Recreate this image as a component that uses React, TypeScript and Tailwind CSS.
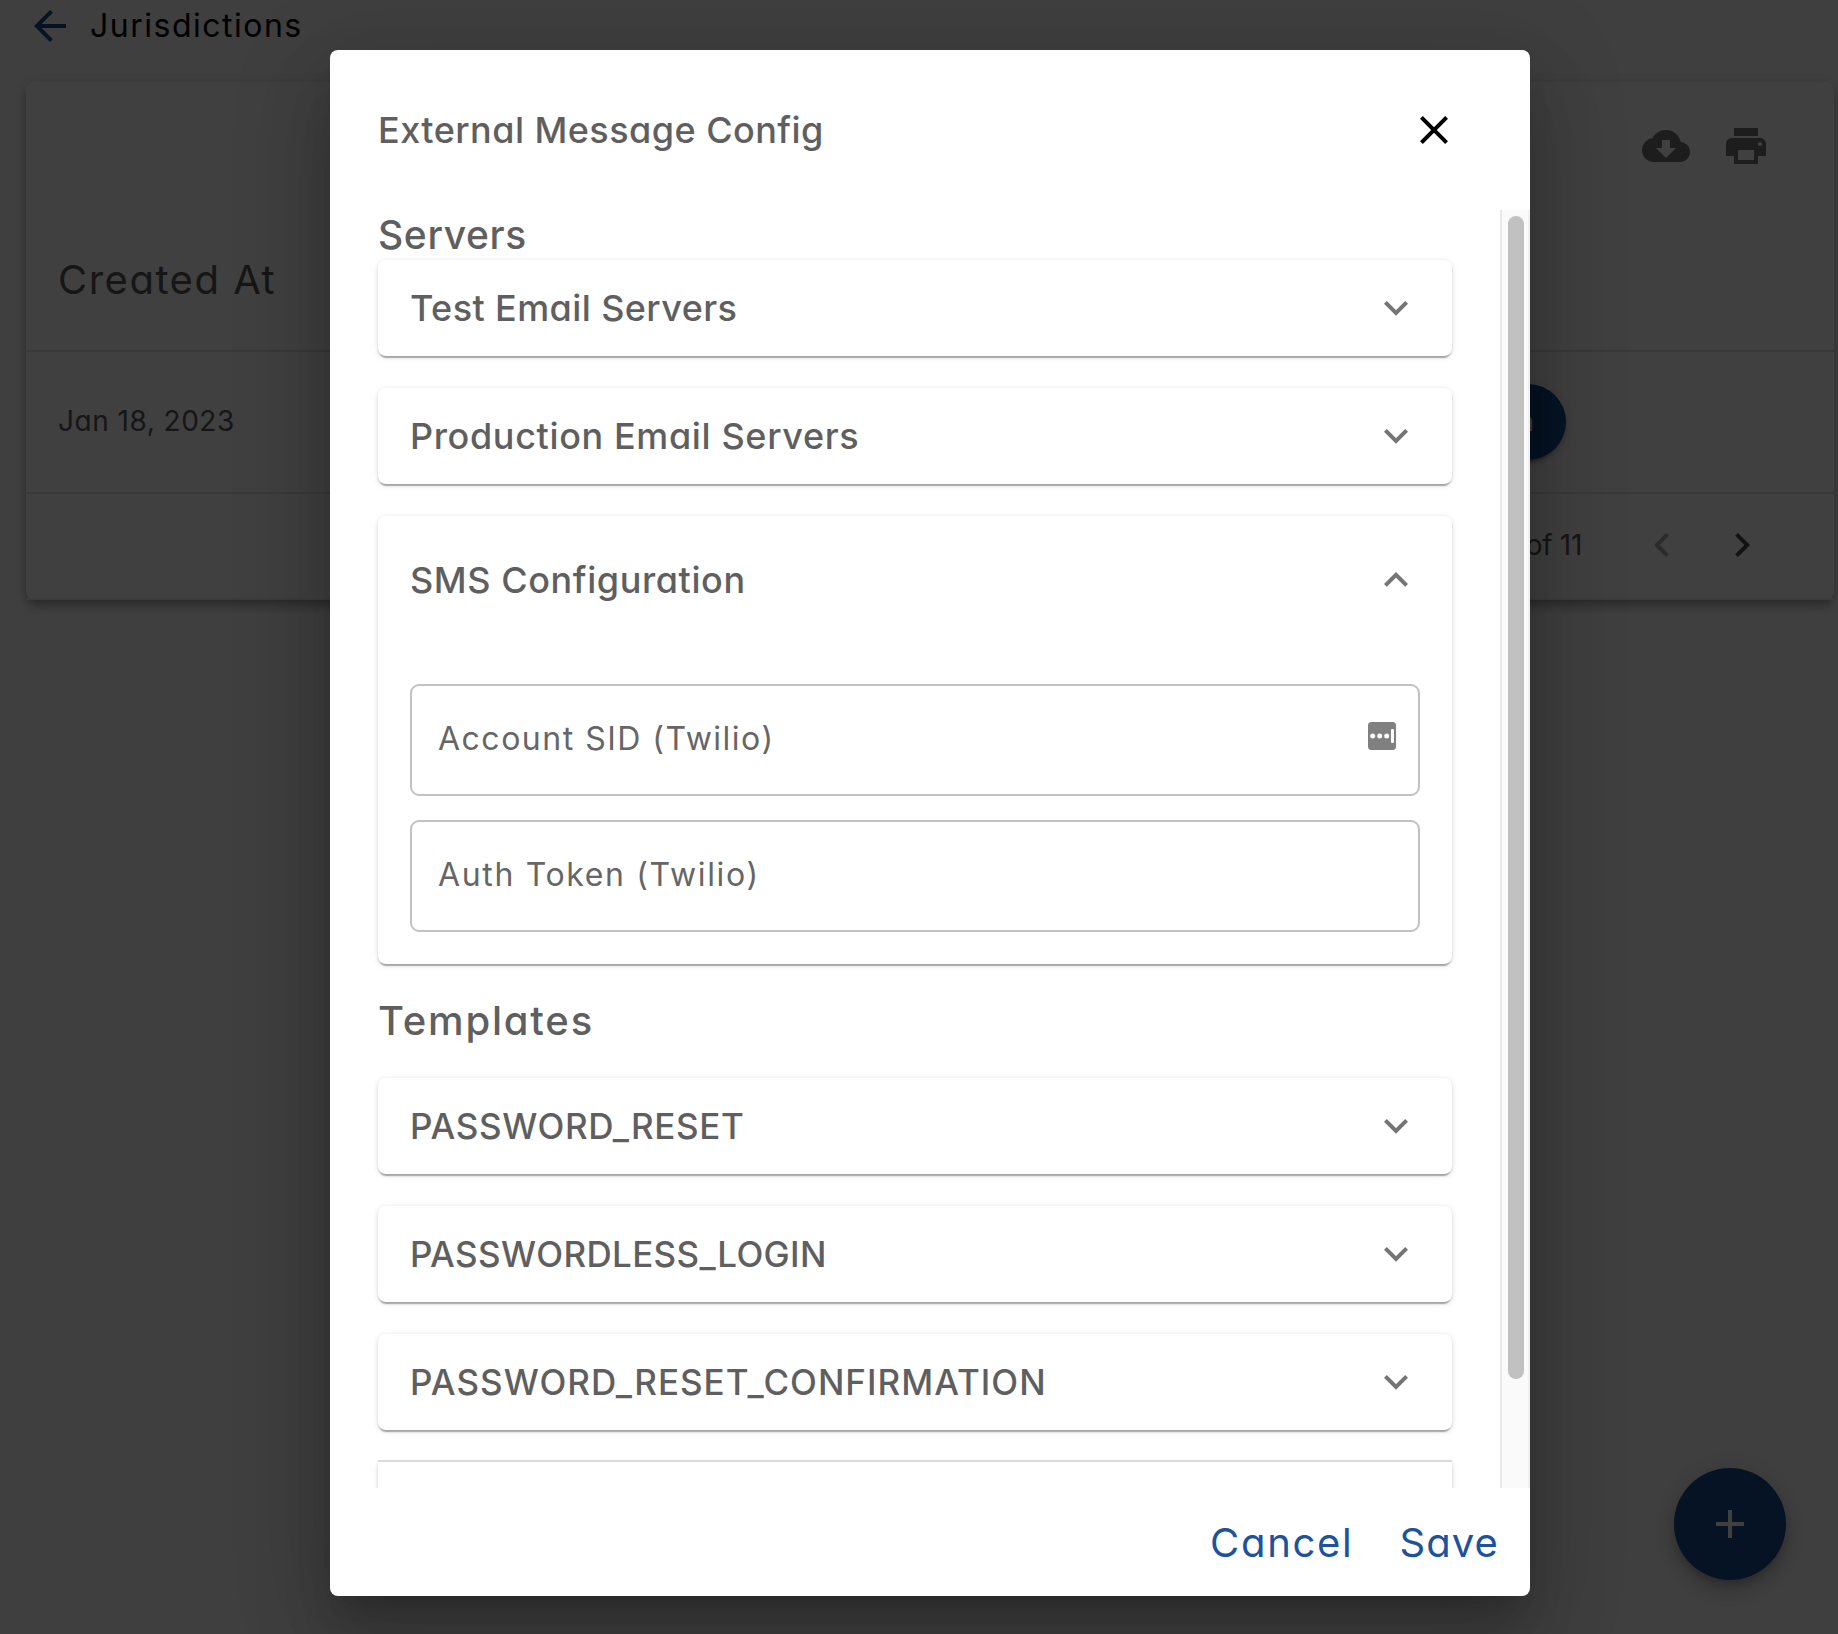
import type { ReactNode } from "react";
import { MdAdd, MdArrowBack, MdChevronLeft, MdChevronRight, MdClose, MdCloudDownload, MdPrint } from "react-icons/md";

function Chevron({ up = false }: { up?: boolean }) {
  return (
    <svg width="24" height="16" viewBox="0 0 24 16" fill="none" stroke="#757575" strokeWidth="4" className="shrink-0">
      <path d={up ? "M1.4 13.4L12 2.8L22.6 13.4" : "M1.4 2.4L12 13L22.6 2.4"} />
    </svg>
  );
}

const panelShadow =
  "shadow-[0_4px_1px_-2px_rgba(0,0,0,0.2),0_2px_2px_0_rgba(0,0,0,0.14),0_1px_6px_0_rgba(0,0,0,0.12)]";

type PanelProps = { title: string; type: string; open?: boolean; children?: ReactNode };

function Panel({ title, type, open = false, children }: PanelProps) {
  return (
    <section className={`shrink-0 rounded-lg bg-white ${panelShadow}`}>
      <header className={`flex items-center justify-between pl-8 pr-11 ${open ? "h-32" : "h-24"}`}>
        <span className={`font-medium leading-none ${type}`}>{title}</span>
        <Chevron up={open} />
      </header>
      {children}
    </section>
  );
}

function Field({ label, spacing, icon }: { label: string; spacing: string; icon?: ReactNode }) {
  return (
    <div className="flex h-28 items-center justify-between rounded-[9px] border-2 border-[#c2c2c2] pl-[26px] pr-[22px] pb-1">
      <span className={`pt-0.5 text-[32px] leading-none text-[#666] ${spacing}`}>{label}</span>
      {icon}
    </div>
  );
}

function AutofillIcon() {
  return (
    <svg width="28" height="28" viewBox="0 0 28 28" className="mb-1">
      <rect width="28" height="28" rx="3.5" fill="#808080" />
      <g fill="#fff">
        <circle cx="4.7" cy="14" r="2.5" />
        <circle cx="11.7" cy="14" r="2.5" />
        <circle cx="18.7" cy="14" r="2.5" />
        <rect x="23" y="7" width="3" height="14" rx="1" />
      </g>
    </svg>
  );
}

function Background() {
  return (
    <div className="flex h-full flex-col bg-[#fcfcfc]">
      <header className="flex h-[82px] items-start pl-[26px] pt-0.5">
        <MdArrowBack size={48} color="#184c8f" />
        <h1 className="ml-4 mt-2 text-[32px] leading-none tracking-[1.5px] text-black">Jurisdictions</h1>
      </header>
      <section className="ml-[26px] flex h-[518px] w-[1808px] flex-col rounded-lg bg-[#fdfdfd] shadow-[0_4px_8px_-2px_rgba(0,0,0,0.2),0_8px_10px_0_rgba(0,0,0,0.14),0_2px_20px_0_rgba(0,0,0,0.12)]">
        <div className="flex h-[98px] items-end justify-end gap-8 pr-16 pb-[10px] text-[#747474]">
          <MdCloudDownload size={48} />
          <MdPrint size={48} />
        </div>
        <div className="flex h-[172px] items-center border-b-2 border-[#e4e4e4] pl-8 pt-[30px]">
          <span className="text-[40px] leading-none tracking-[1.5px] text-[#5a5a5a]">Created At</span>
        </div>
        <div className="flex h-[142px] items-center justify-between border-b-2 border-[#e4e4e4] pl-8 pr-[268px]">
          <span className="pb-0.5 text-[28px] leading-none tracking-[0.5px] text-[#5a5a5a]">Jan 18, 2023</span>
          <button className="flex h-[76px] items-center rounded-full bg-[#184c8f] pl-8 pr-8 text-[27px] text-white shadow-[0_6px_2px_-4px_rgba(0,0,0,0.2),0_4px_4px_0_rgba(0,0,0,0.14),0_2px_10px_0_rgba(0,0,0,0.12)]">
            Action
          </button>
        </div>
        <div className="flex h-[106px] items-center justify-end border-b-2 border-[#f0f0f0] pr-[68px] pb-0.5">
          <span className="mr-[56px] text-[28px] leading-none tracking-[-0.3px] text-[#5a5a5a]">1 – 10 of 11</span>
          <MdChevronLeft size={48} className="mr-8 text-[#ababab]" />
          <MdChevronRight size={48} className="text-[#484848]" />
        </div>
      </section>
      <button className="mb-[54px] mr-[52px] mt-auto flex size-28 items-center justify-center self-end rounded-full bg-[#184c8f] text-white shadow-[0_6px_10px_-2px_rgba(0,0,0,0.2),0_12px_20px_0_rgba(0,0,0,0.14),0_2px_36px_0_rgba(0,0,0,0.12)]">
        <MdAdd size={48} />
      </button>
    </div>
  );
}

function Dialog() {
  return (
    <div className="ml-[330px] mt-[50px] flex h-[1546px] w-[1200px] flex-col overflow-hidden rounded-lg bg-white text-[#5f5f5f]">
      <header className="flex h-40 shrink-0 items-center justify-between pl-12 pr-[72px]">
        <h2 className="text-[36px] font-medium leading-none tracking-[0.45px]">External Message Config</h2>
        <MdClose size={48} color="#000" />
      </header>

      <div className="flex h-[1278px] shrink-0">
        <div className="flex h-full flex-1 flex-col overflow-hidden px-12">
          <h3 className="flex h-[50px] shrink-0 items-center pb-0.5 text-[39px] font-medium leading-none tracking-[0.65px]">
            Servers
          </h3>
          <div className="flex shrink-0 flex-col gap-8">
            <Panel title="Test Email Servers" type="text-[36px] tracking-[0.4px]" />
            <Panel title="Production Email Servers" type="text-[36px] tracking-[0.63px]" />
            <Panel title="SMS Configuration" type="text-[36px] tracking-[0.58px]" open>
              <div className="flex flex-col gap-6 px-8 pb-8 pt-10">
                <Field label="Account SID (Twilio)" spacing="tracking-[1.5px]" icon={<AutofillIcon />} />
                <Field label="Auth Token (Twilio)" spacing="tracking-[1.65px]" />
              </div>
            </Panel>
          </div>
          <h3 className="flex h-[114px] shrink-0 items-center text-[40px] font-medium leading-none tracking-[1.8px]">
            Templates
          </h3>
          <div className="flex shrink-0 flex-col gap-8">
            <Panel title="PASSWORD_RESET" type="text-[35px] tracking-[0.63px]" />
            <Panel title="PASSWORDLESS_LOGIN" type="text-[35px] tracking-[0.35px]" />
            <Panel title="PASSWORD_RESET_CONFIRMATION" type="text-[35px] tracking-[1px]" />
          </div>
          <div className="mt-[30px] h-24 shrink-0 border-t-2 border-[#dadada] bg-white shadow-[0_2px_2px_0_rgba(0,0,0,0.14),0_4px_6px_0_rgba(0,0,0,0.12)]" />
        </div>
        <div className="flex w-[30px] justify-center border-l-2 border-r-2 border-l-[#e8e8e8] border-r-[#f0f0f0] bg-[#fafafa] pl-px pt-1.5">
          <div className="h-[1163px] w-4 rounded-full bg-[#c1c1c1]" />
        </div>
      </div>

      <footer className="flex flex-1 items-center justify-end pr-[31px] pt-0.5 text-[40px] leading-none text-[#1d539b]">
        <button className="mr-[46px] tracking-[1.7px]">Cancel</button>
        <button className="tracking-[1.1px]">Save</button>
      </footer>
    </div>
  );
}

export default function App() {
  return (
    <div className="relative h-[1634px] w-[1838px] overflow-hidden font-['Inter',sans-serif] [font-feature-settings:'cv11']">
      <Background />
      <div className="absolute inset-0 bg-black/75">
        <div className="flow-root [&>div]:shadow-[0_22px_30px_-14px_rgba(0,0,0,0.2),0_48px_76px_6px_rgba(0,0,0,0.14),0_18px_92px_16px_rgba(0,0,0,0.12)]">
          <Dialog />
        </div>
      </div>
    </div>
  );
}
